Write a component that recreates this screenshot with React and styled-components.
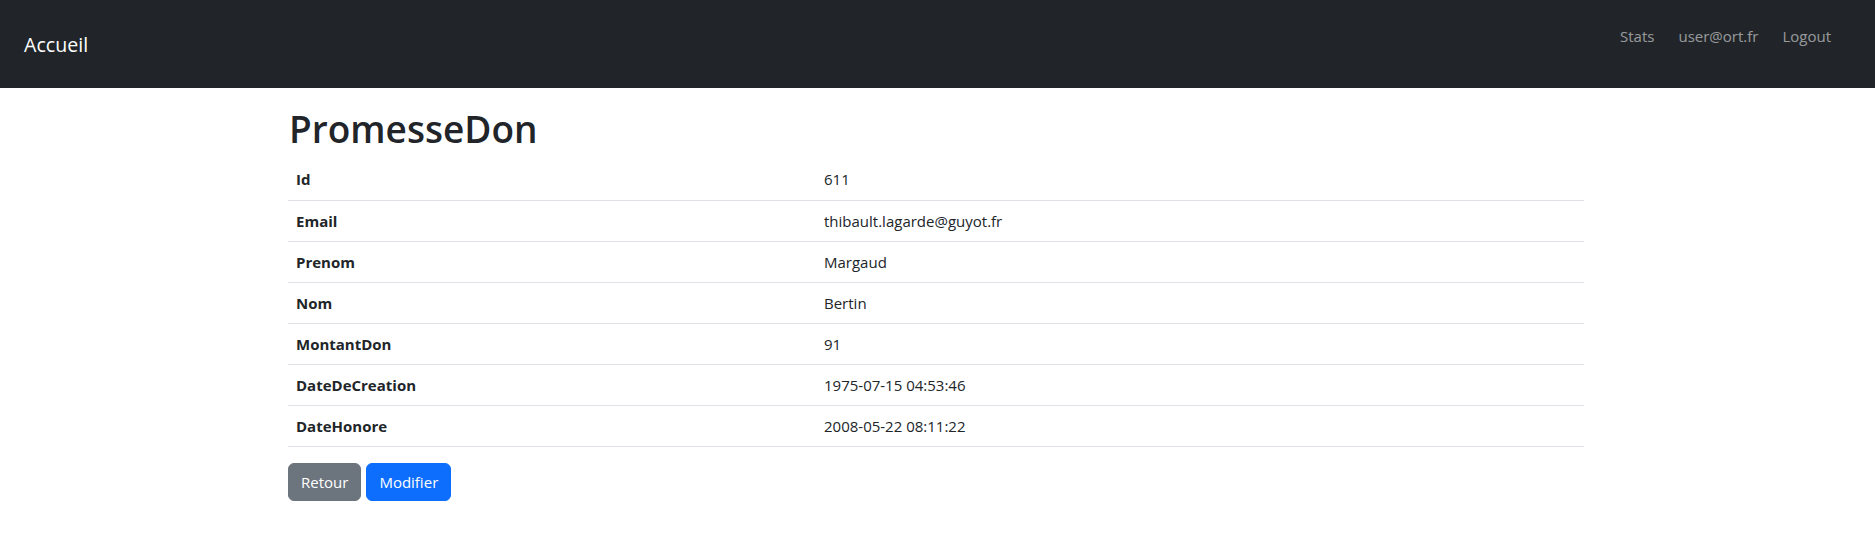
import React from 'react';
import styled, { createGlobalStyle } from 'styled-components';

const GlobalStyle = createGlobalStyle`
  * { box-sizing: border-box; }
  body {
    margin: 0;
    font-family: "Open Sans", "Noto Sans", sans-serif;
    font-size: 15px;
    line-height: 1.6;
    color: #212529;
    background: #fff;
  }
`;

const Navbar = styled.nav`
  height: 88px;
  background: #212529;
  display: flex;
  justify-content: space-between;
  padding: 0 44px 0 24px;
`;

const Brand = styled.a`
  color: #fff;
  font-size: 19.6px;
  line-height: 1;
  align-self: center;
  margin-top: 2px;
  text-decoration: none;
`;

const NavLinks = styled.ul`
  list-style: none;
  margin: 0;
  padding: 0;
  display: flex;
  gap: 24px;
  padding-top: 25px;
`;

const NavLink = styled.li`
  color: rgba(255, 255, 255, 0.55);
  font-size: 15px;
  line-height: 22px;
`;

const Main = styled.main`
  margin-left: 288px;
  width: 1296px;
  padding-top: 17px;
`;

const Title = styled.h1`
  margin: 0 0 6px;
  font-size: 37px;
  font-weight: 600;
  line-height: 48px;
  padding-left: 1px;
`;

const Table = styled.table`
  width: 100%;
  border-collapse: collapse;
  margin-bottom: 16px;
`;

const Row = styled.tr`
  border-bottom: 1px solid #dee2e6;
`;

const Cell = styled.td`
  padding: 8px;
  height: 41px;
  font-weight: ${p => (p.$label ? 700 : 400)};
  width: ${p => (p.$label ? '528px' : 'auto')};
  vertical-align: middle;
`;

const Actions = styled.div`
  display: flex;
  gap: 5px;
`;

const Button = styled.button`
  font-family: inherit;
  font-size: 15px;
  color: #fff;
  background: ${p => (p.$primary ? '#0d6efd' : '#6c757d')};
  border: 1px solid ${p => (p.$primary ? '#0d6efd' : '#6c757d')};
  border-radius: 6px;
  height: 38px;
  padding: 0 12px;
  cursor: pointer;
`;

const fields = [
  ['Id', '611'],
  ['Email', 'thibault.lagarde@guyot.fr'],
  ['Prenom', 'Margaud'],
  ['Nom', 'Bertin'],
  ['MontantDon', '91'],
  ['DateDeCreation', '1975-07-15 04:53:46'],
  ['DateHonore', '2008-05-22 08:11:22'],
];

export default function App() {
  return (
    <>
      <GlobalStyle />
      <Navbar>
        <Brand href="#">Accueil</Brand>
        <NavLinks>
          <NavLink>Stats</NavLink>
          <NavLink>user@ort.fr</NavLink>
          <NavLink>Logout</NavLink>
        </NavLinks>
      </Navbar>
      <Main>
        <Title>PromesseDon</Title>
        <Table>
          <tbody>
            {fields.map(([label, value]) => (
              <Row key={label}>
                <Cell $label>{label}</Cell>
                <Cell>{value}</Cell>
              </Row>
            ))}
          </tbody>
        </Table>
        <Actions>
          <Button>Retour</Button>
          <Button $primary>Modifier</Button>
        </Actions>
      </Main>
    </>
  );
}
